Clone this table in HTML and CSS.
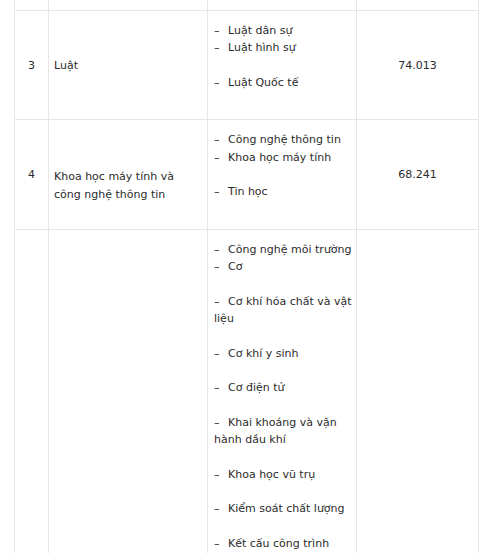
FILE: index.html
```html
<!DOCTYPE html>
<html lang="vi">
<head>
<meta charset="utf-8">
<link rel="stylesheet" href="styles.css">
</head>
<body>
<div class="wrap">
<table class="grid">
  <colgroup>
    <col class="c1"><col class="c2"><col class="c3"><col class="c4">
  </colgroup>
  <tr class="cut"><td></td><td></td><td></td><td></td></tr>
  <tr>
    <td class="num">3</td>
    <td>Luật</td>
    <td class="list"><p><span class="d">–</span> Luật dân sự<br><span class="d">–</span> Luật hình sự</p><p><span class="d">–</span> Luật Quốc tế</p></td>
    <td class="num">74.013</td>
  </tr>
  <tr>
    <td class="num">4</td>
    <td class="lower">Khoa học máy tính và công nghệ thông tin</td>
    <td class="list"><p><span class="d">–</span> Công nghệ thông tin<br><span class="d">–</span> Khoa học máy tính</p><p><span class="d">–</span> Tin học</p></td>
    <td class="num">68.241</td>
  </tr>
  <tr>
    <td class="num"></td>
    <td></td>
    <td class="list"><p><span class="d">–</span> Công nghệ môi trường<br><span class="d">–</span> Cơ</p><p><span class="d">–</span> Cơ khí hóa chất và vật liệu</p><p><span class="d">–</span> Cơ khí y sinh</p><p><span class="d">–</span> Cơ điện tử</p><p><span class="d">–</span> Khai khoáng và vận hành dầu khí</p><p><span class="d">–</span> Khoa học vũ trụ</p><p><span class="d">–</span> Kiểm soát chất lượng</p><p><span class="d">–</span> Kết cấu công trình</p><p><span class="d">–</span> Kỹ thuật cơ khí</p></td>
    <td class="num"></td>
  </tr>
</table>
</div>
</body>
</html>
```
FILE: styles.css
```css
html, body {
  margin: 0;
  background: #fff;
}
body {
  font-family: "DejaVu Sans", Verdana, sans-serif;
  font-size: 11px;
  line-height: 17.3px;
  color: #2b2b2b;
}
.wrap {
  padding: 0 8px 0 14px;
}
.grid {
  width: 464px;
  border-collapse: collapse;
  table-layout: fixed;
}
.c1 { width: 34px; }
.c2 { width: 159px; }
.c3 { width: 149px; }
.c4 { width: 122px; }
.grid td {
  border: 1px solid #e6e6e6;
  padding: 11px 5px;
  vertical-align: middle;
  text-align: left;
}
.grid td.num { text-align: center; }
.grid tr.cut td {
  height: 10px;
  padding: 0;
  border-top: none;
}
.list p {
  margin: 0 0 17.3px;
}
.grid td.list {
  padding-left: 6px;
  padding-right: 3px;
}
.d {
  margin-right: 5px;
}
.grid td.lower {
  padding-top: 33px;
}
```
